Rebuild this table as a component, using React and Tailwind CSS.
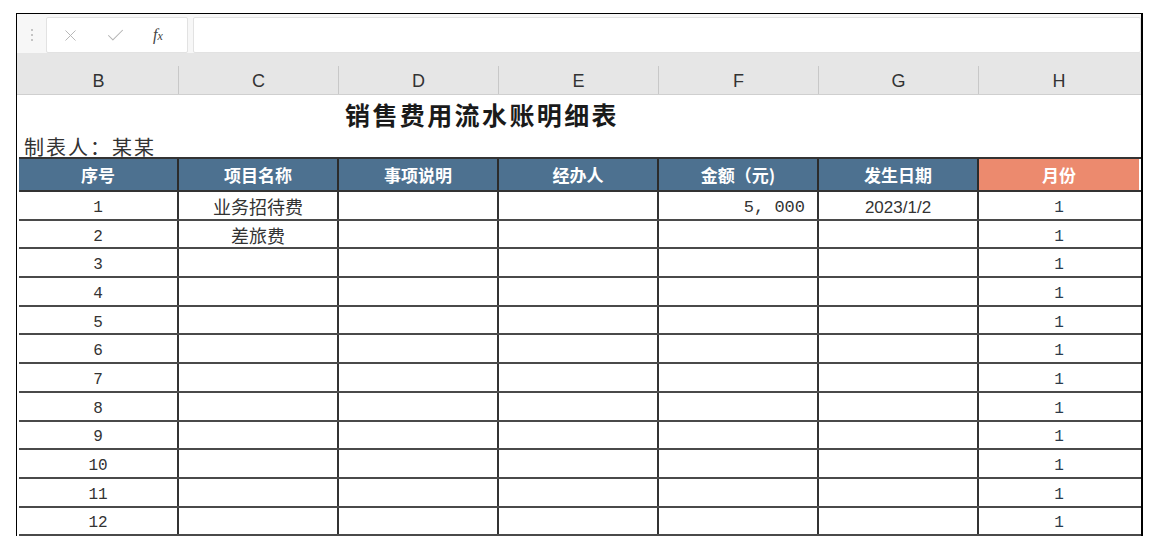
import { X, Check } from "lucide-react";

const cols = ["B", "C", "D", "E", "F", "G", "H"];
const heads = ["序号", "项目名称", "事项说明", "经办人", "金额（元)", "发生日期", "月份"];

const rows = Array.from({ length: 12 }, (_, i) => ({
  no: i + 1,
  name: i === 0 ? "业务招待费" : i === 1 ? "差旅费" : "",
  amount: i === 0 ? "5, 000" : "",
  date: i === 0 ? "2023/1/2" : "",
}));

const mono = { fontFamily: '"Liberation Mono", "Noto Sans CJK SC", monospace' };

export default function App() {
  return (
    <div className="w-[1158px] h-[550px] bg-white overflow-hidden pt-[13px] pl-[16px]" style={{ fontFamily: '"Liberation Sans", "Noto Sans CJK SC", sans-serif' }}>
      <div className="w-[1127px] border-l border-t border-r-2 border-black flex flex-col">
        {/* formula bar */}
        <div className="h-[39px] bg-[#f7f7f7] flex items-start pt-[3px]">
          <div className="w-[29px] h-[36px] flex flex-col items-center justify-center gap-[3px] pl-[1px]">
            <span className="w-[2px] h-[2px] bg-[#c4c4c4]" />
            <span className="w-[2px] h-[2px] bg-[#c4c4c4]" />
            <span className="w-[2px] h-[2px] bg-[#c4c4c4]" />
          </div>
          <div className="w-[142px] h-[36px] bg-white border border-[#e2e2e2] rounded-[2px] flex items-center">
            <X size={19} strokeWidth={1.2} className="text-[#b4b4b4] ml-[14px]" />
            <Check size={21} strokeWidth={1.2} className="text-[#b4b4b4] ml-[25px]" />
            <span className="ml-[27px] text-[16px] italic text-[#444] leading-none" style={{ fontFamily: '"Liberation Serif", serif' }}>
              f<span className="text-[12px]">x</span>
            </span>
          </div>
          <div className="ml-[5px] flex-1 h-[36px] bg-white border border-[#e2e2e2] rounded-[2px]" />
        </div>
        {/* column letters */}
        <div className="h-[42px] bg-[#e6e6e6] flex pl-[2px] border-b border-[#cfcfcf]">
          {cols.map((c, i) => (
            <div key={c} className="w-[160px] flex items-end">
              <div className={`w-full h-[28px] flex items-center justify-center pt-[3px] text-[18px] text-[#333] ${i < 6 ? "border-r border-[#c8c8c8]" : ""}`}>
                {c}
              </div>
            </div>
          ))}
        </div>
        {/* title area */}
        <div className="h-[62px] flex flex-col" style={{ fontFamily: '"Noto Sans CJK SC", sans-serif' }}>
          <div className="h-[40px] flex items-center pl-[328px] text-[25px] font-bold text-[#1a1a1a] tracking-[2.4px]">销售费用流水账明细表</div>
          <div className="h-[22px] flex items-end pl-[7px] text-[20px] leading-none text-[#333] tracking-[2px]">制表人：某某</div>
        </div>
        {/* table */}
        <div className="ml-[2px] w-[1122px] flex flex-col border-t-2 border-[#333]" style={{ fontFamily: '"Noto Sans CJK SC", sans-serif' }}>
          <div className="h-[33px] flex border-b-2 border-[#333]">
            {heads.map((h, i) => (
              <div
                key={h}
                className={`w-[160px] flex items-center justify-center text-[17px] font-bold text-white ${i === 6 ? "bg-[#ec8a6e]" : "bg-[#4d7190] border-r-2 border-[#2b2b2b]"}`}
              >
                {h}
              </div>
            ))}
          </div>
          {rows.map((r) => (
            <div key={r.no} className="h-[28.7px] flex border-b-2 border-[#4a4a4a] text-[#333]">
              <div className="w-[160px] border-r-2 border-[#333] flex items-center justify-center pt-[5px] text-[16px]" style={mono}>{r.no}</div>
              <div className="w-[160px] border-r-2 border-[#333] flex items-center justify-center pt-[3px] text-[18px]">{r.name}</div>
              <div className="w-[160px] border-r-2 border-[#333]" />
              <div className="w-[160px] border-r-2 border-[#333]" />
              <div className="w-[160px] border-r-2 border-[#333] flex items-center justify-end pr-[12px] pt-[5px] text-[17px]" style={mono}>{r.amount}</div>
              <div className="w-[160px] border-r-2 border-[#333] flex items-center justify-center pt-[5px] text-[17px]" style={{ fontFamily: '"Liberation Sans", sans-serif' }}>{r.date}</div>
              <div className="w-[160px] flex items-center justify-center pt-[5px] text-[16px] text-[#2b3a4a]" style={mono}>1</div>
            </div>
          ))}
        </div>
      </div>
    </div>
  );
}
